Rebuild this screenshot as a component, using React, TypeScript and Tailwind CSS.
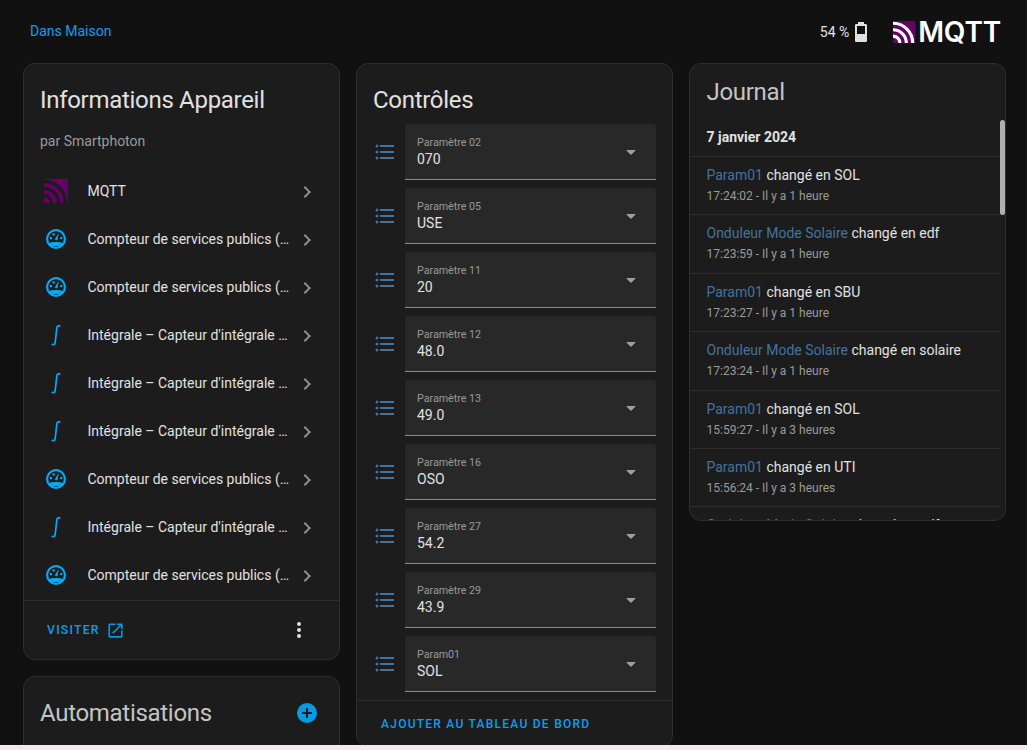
import React from 'react';

const mdi = {
  chevron: 'M8.59,16.58L13.17,12L8.59,7.41L10,6L16,12L10,18L8.59,16.58Z',
  openNew: 'M14,3V5H17.59L7.76,14.83L9.17,16.24L19,6.41V10H21V3M19,19H5V5H12V3H5C3.89,3 3,3.9 3,5V19A2,2 0 0,0 5,21H19A2,2 0 0,0 21,19V12H19V19Z',
  dots: 'M12,16A2,2 0 0,1 14,18A2,2 0 0,1 12,20A2,2 0 0,1 10,18A2,2 0 0,1 12,16M12,10A2,2 0 0,1 14,12A2,2 0 0,1 12,14A2,2 0 0,1 10,12A2,2 0 0,1 12,10M12,4A2,2 0 0,1 14,6A2,2 0 0,1 12,8A2,2 0 0,1 10,6A2,2 0 0,1 12,4Z',
  plus: 'M17,13H13V17H11V13H7V11H11V7H13V11H17M12,2A10,10 0 0,0 2,12A10,10 0 0,0 12,22A10,10 0 0,0 22,12A10,10 0 0,0 12,2Z',
  list: 'M7,5H21V7H7V5M7,13V11H21V13H7M4,4.5A1.5,1.5 0 0,1 5.5,6A1.5,1.5 0 0,1 4,7.5A1.5,1.5 0 0,1 2.5,6A1.5,1.5 0 0,1 4,4.5M4,10.5A1.5,1.5 0 0,1 5.5,12A1.5,1.5 0 0,1 4,13.5A1.5,1.5 0 0,1 2.5,12A1.5,1.5 0 0,1 4,10.5M7,19V17H21V19H7M4,16.5A1.5,1.5 0 0,1 5.5,18A1.5,1.5 0 0,1 4,19.5A1.5,1.5 0 0,1 2.5,18A1.5,1.5 0 0,1 4,16.5Z',
  battery: 'M16,14H8V6H16M16.67,4H15V2H9V4H7.33A1.33,1.33 0 0,0 6,5.33V20.67C6,21.4 6.6,22 7.33,22H16.67A1.33,1.33 0 0,0 18,20.67V5.33C18,4.6 17.4,4 16.67,4Z',
};

const Icon = ({ d, className }: { d: string; className: string }) => (
  <svg viewBox="0 0 24 24" className={className} fill="currentColor">
    <path fillRule="evenodd" d={d} />
  </svg>
);

const MqttMark = ({ className, arc }: { className: string; arc: string }) => (
  <svg viewBox="0 0 24 24" className={className}>
    <rect x="0" y="0" width="24" height="24" fill="#660066" />
    <g fill="none" stroke={arc} strokeWidth="3.4">
      <path d="M0 16.5A7.5 7.5 0 0 1 7.5 24" />
      <path d="M0 9.5A14.5 14.5 0 0 1 14.5 24" />
      <path d="M0 2.5A21.5 21.5 0 0 1 21.5 24" />
    </g>
  </svg>
);

const GaugeIcon = () => (
  <svg viewBox="0 0 24 24" className="w-6 h-6 text-[#03a9f4]">
    <circle cx="12" cy="12" r="8.9" fill="none" stroke="currentColor" strokeWidth="2.2" />
    <path d="M4.6 16.2C7 14.6 17 14.6 19.4 16.2L18 19H6Z" fill="currentColor" />
    <path d="M10.6 12.4L14.8 6L13.4 13.6Z" fill="currentColor" />
    <circle cx="7" cy="11" r="1.2" fill="currentColor" />
    <circle cx="9.6" cy="7.4" r="1.2" fill="currentColor" />
    <circle cx="17.2" cy="11" r="1.2" fill="currentColor" />
  </svg>
);

const IntegralIcon = () => (
  <svg viewBox="0 0 24 24" className="w-6 h-6 text-[#03a9f4]">
    <path d="M7.5 21.5H9.5C10.5 21.5 11 20.8 11.2 19.5L12.8 5C13 3.4 13.6 2.8 14.6 2.8H16.4" fill="none" stroke="currentColor" strokeWidth="1.7" />
  </svg>
);

type Kind = 'mqtt' | 'gauge' | 'integral';

const devices: { kind: Kind; label: string }[] = [
  { kind: 'mqtt', label: 'MQTT' },
  { kind: 'gauge', label: 'Compteur de services publics (Jour)' },
  { kind: 'gauge', label: 'Compteur de services publics (Mois)' },
  { kind: 'integral', label: "Intégrale – Capteur d'intégrale Solaire" },
  { kind: 'integral', label: "Intégrale – Capteur d'intégrale Réseau" },
  { kind: 'integral', label: "Intégrale – Capteur d'intégrale Charge" },
  { kind: 'gauge', label: 'Compteur de services publics (Année)' },
  { kind: 'integral', label: "Intégrale – Capteur d'intégrale Batterie" },
  { kind: 'gauge', label: 'Compteur de services publics (Total)' },
];

const controls = [
  ['Paramètre 02', '070'],
  ['Paramètre 05', 'USE'],
  ['Paramètre 11', '20'],
  ['Paramètre 12', '48.0'],
  ['Paramètre 13', '49.0'],
  ['Paramètre 16', 'OSO'],
  ['Paramètre 27', '54.2'],
  ['Paramètre 29', '43.9'],
  ['Param01', 'SOL'],
];

const journal = [
  ['Param01', 'changé en SOL', '17:24:02 - Il y a 1 heure'],
  ['Onduleur Mode Solaire', 'changé en edf', '17:23:59 - Il y a 1 heure'],
  ['Param01', 'changé en SBU', '17:23:27 - Il y a 1 heure'],
  ['Onduleur Mode Solaire', 'changé en solaire', '17:23:24 - Il y a 1 heure'],
  ['Param01', 'changé en SOL', '15:59:27 - Il y a 3 heures'],
  ['Param01', 'changé en UTI', '15:56:24 - Il y a 3 heures'],
  ['Onduleur Mode Solaire', 'changé en edf', '15:56:20 - Il y a 3 heures'],
];

const cardClass = 'bg-[#1c1c1c] border border-[#2e2e2e] rounded-xl overflow-hidden';

const DeviceCard = () => (
  <div className={cardClass}>
    <div className="px-4 pt-[20px] pb-0">
      <h2 className="text-[24px] tracking-[-0.3px] leading-8 text-[#e1e1e1]">Informations Appareil</h2>
      <div className="mt-[15px] text-sm leading-5 text-[#9b9b9b]">par Smartphoton</div>
    </div>
    <div className="mt-[16px] mb-[1px]">
      {devices.map((d, i) => (
        <div key={i} className="h-12 flex items-center pl-5 pr-[20px]">
          <div className="w-6 h-6 shrink-0">
            {d.kind === 'mqtt' && <MqttMark className="w-6 h-6" arc="#1c1c1c" />}
            {d.kind === 'gauge' && <GaugeIcon />}
            {d.kind === 'integral' && <IntegralIcon />}
          </div>
          <div className="ml-[19.5px] flex-1 min-w-0 truncate text-sm text-[#e1e1e1]">{d.label}</div>
          <Icon d={mdi.chevron} className="w-6 h-6 ml-[4px] mt-[2px] shrink-0 text-[#8f8f8f]" />
        </div>
      ))}
    </div>
    <div className="h-[59px] pt-[1px] border-t border-[#2e2e2e] flex items-center pl-[23px] pr-[29px]">
      <span className="text-[12.3px] font-medium tracking-[1.2px] text-[#0b9eee]">VISITER</span>
      <Icon d={mdi.openNew} className="w-[19px] h-[19px] ml-[6px] text-[#039be5]" />
      <div className="flex-1" />
      <Icon d={mdi.dots} className="w-6 h-6 -mr-[1px] -mt-[2px] text-[#e1e1e1]" />
    </div>
  </div>
);

const AutomationCard = () => (
  <div className={`${cardClass} h-[200px] shrink-0`}>
    <div className="flex items-center justify-between pl-4 pr-[20px] pt-5">
      <h2 className="text-[24px] tracking-[-0.3px] leading-8 text-[#c4c4c4]">Automatisations</h2>
      <Icon d={mdi.plus} className="w-6 h-6 text-[#039be5]" />
    </div>
  </div>
);

const ControlsCard = () => (
  <div className={`${cardClass} h-[684px] shrink-0 flex flex-col`}>
    <h2 className="px-4 pt-[20px] text-[24px] tracking-[-0.3px] leading-8 text-[#e1e1e1]">Contrôles</h2>
    <div className="mt-[8px] px-4 flex flex-col gap-2">
      {controls.map(([label, value]) => (
        <div key={label} className="flex items-center">
          <Icon d={mdi.list} className="w-6 h-6 text-[#44739e]" />
          <div className="ml-[8px] flex-1 h-14 bg-[#282828] rounded-t border-b border-[#8a8a8a] flex items-center pl-3 pr-[13px]">
            <div className="flex-1 pt-[1px]">
              <div className="text-[10.7px] leading-[14px] text-[#9a9a9a]">{label}</div>
              <div className="text-sm leading-[18px] text-[#e1e1e1]">{value}</div>
            </div>
            <svg viewBox="0 0 10 5" className="w-[10px] h-[5px] mr-[7px] mt-[2px] text-[#a0a0a0]" fill="currentColor">
              <path d="M0 0L10 0L5 5Z" />
            </svg>
          </div>
        </div>
      ))}
    </div>
    <div className="mt-2 flex-1 border-t border-[#2e2e2e] flex items-center pl-6">
      <span className="text-xs font-medium tracking-[1.25px] text-[#0b9eee]">AJOUTER AU TABLEAU DE BORD</span>
    </div>
  </div>
);

const JournalCard = () => (
  <div className={`${cardClass} relative h-[458px]`}>
    <h2 className="pl-[16.5px] pt-[12px] text-[24px] tracking-[-0.3px] leading-8 text-[#c4c4c4]">Journal</h2>
    <div className="mt-[19px] mr-[5px] h-[30px] pl-[16.5px] text-sm font-bold leading-5 text-[#e1e1e1] border-b border-[#2e2e2e]">7 janvier 2024</div>
    {journal.map(([name, action, time], i) => (
      <div key={i} className="h-[58.4px] mr-[5px] pl-[16.5px] pt-[8px] border-b border-[#2e2e2e]">
        <div className="text-sm leading-5 text-[#e1e1e1]">
          <span className="text-[#44739e]">{name}</span> {action}
        </div>
        <div className="mt-[1px] text-xs leading-5 text-[#9b9b9b]">{time}</div>
      </div>
    ))}
    {/* scrollbar */}
    <div className="absolute right-0 top-[56px] w-[5px] h-[95px] rounded-sm bg-[#b0b0b0]" />
  </div>
);

export default function App() {
  return (
    <div className="h-[750px] overflow-hidden bg-[#111111] flex flex-col font-['Roboto',sans-serif]">
      <div className="h-[745px] shrink-0 overflow-hidden">
        <header className="h-[63px] flex items-center pl-[30px] pr-[26px]">
          <span className="text-sm -mt-[2px] text-[#0b9eee]">Dans Maison</span>
          <div className="flex-1" />
          <span className="text-sm text-[#e1e1e1]">54 %</span>
          <Icon d={mdi.battery} className="w-6 h-6 text-[#e1e1e1]" />
          <MqttMark className="w-[22px] h-[22px] ml-[20px]" arc="#ffffff" />
          <span className="ml-[3px] font-['Inter',sans-serif] text-[28px] leading-none font-semibold tracking-[-0.2px] text-white">MQTT</span>
        </header>
        <main className="flex gap-4 pl-[23px] pr-[21px]">
          <div className="flex-1 min-w-0 flex flex-col gap-4">
            <DeviceCard />
            <AutomationCard />
          </div>
          <div className="flex-1 min-w-0">
            <ControlsCard />
          </div>
          <div className="flex-1 min-w-0">
            <JournalCard />
          </div>
        </main>
      </div>
      <div className="flex-1 bg-[#f3e9e5]" />
    </div>
  );
}
